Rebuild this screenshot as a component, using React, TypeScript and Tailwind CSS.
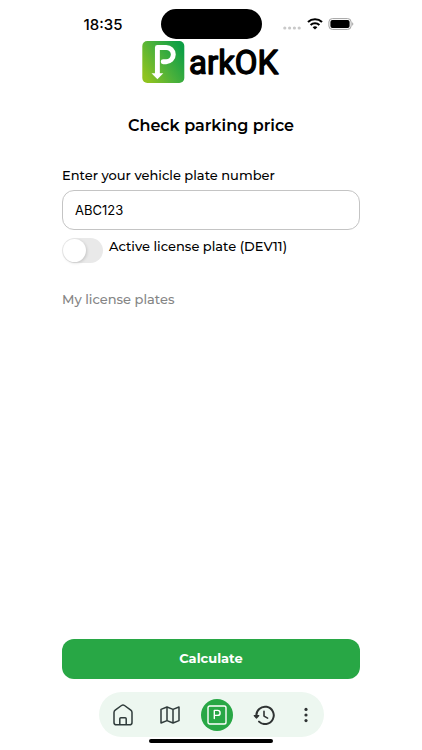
import { useState } from 'react';

function StatusBar() {
  return (
    <div className="grid w-full grid-cols-[1fr_101px_1fr] items-center pt-[9px]">
      <div className="pr-[38px] text-right font-['Inter',sans-serif] text-[15px] font-medium leading-none">
        18:35
      </div>
      <div className="h-[30px] rounded-full bg-black" />
      <div className="flex items-center pl-[21px]">
        <svg width="18" height="4" viewBox="0 0 18 4" fill="#c9c9c9" className="mt-2">
          <circle cx="1.8" cy="2" r="1.6" />
          <circle cx="6.6" cy="2" r="1.6" />
          <circle cx="11.4" cy="2" r="1.6" />
          <circle cx="16.2" cy="2" r="1.6" />
        </svg>
        <svg width="16" height="12" viewBox="0 0 16 12" fill="none" stroke="#000" strokeWidth="2.1" className="ml-[6px]">
          <path d="M1 4.1a10.2 10.2 0 0 1 14 0" />
          <path d="M3.6 7a6.4 6.4 0 0 1 8.8 0" />
          <path d="M8 11.6 5.6 9.3a3.5 3.5 0 0 1 4.8 0Z" fill="#000" stroke="none" />
        </svg>
        <svg width="26" height="12" viewBox="0 0 26 12" className="ml-[5px]">
          <rect x="0.9" y="0.6" width="22.2" height="10.8" rx="3.4" fill="none" stroke="#a3a3a3" />
          <rect x="2.4" y="2.1" width="19.2" height="7.8" rx="2" fill="#000" />
          <path d="M24.2 4.2v3.6c1.5-.6 1.5-3 0-3.6Z" fill="#a3a3a3" />
        </svg>
      </div>
    </div>
  );
}

function Logo() {
  return (
    <svg width="138" height="42" viewBox="0 0 138 42" fill="none" className="mt-[2px]">
      <defs>
        <linearGradient id="logo-bg" x1="2" y1="34" x2="41" y2="10" gradientUnits="userSpaceOnUse">
          <stop offset="0" stopColor="#8fc31f" />
          <stop offset="0.5" stopColor="#4bb13b" />
          <stop offset="1" stopColor="#0f9f45" />
        </linearGradient>
      </defs>
      <rect x="0.3" width="42" height="42" rx="5" fill="url(#logo-bg)" />
      <path d="M15.4 33V6.500h8.800a7.100 7.100 0 0 1 0 14.200h-3" stroke="#fff" strokeWidth="4.900" strokeLinejoin="round" strokeLinecap="round" />
      <path d="M9.500 32.300h11.800l-5.900 6Z" fill="#fff" />
      <text
        x="47"
        y="33"
        fill="#000"
        stroke="#000"
        strokeWidth="1.4"
        strokeLinejoin="round"
        className="font-['Roboto',sans-serif] text-[33px]"
      >
        arkOK
      </text>
    </svg>
  );
}

function HomeIcon() {
  return (
    <svg width="20" height="22" viewBox="0 0 20 22" fill="none" stroke="#2f3b3a" strokeWidth="1.5" strokeLinejoin="round">
      <path d="M1 8.400c0-1 .4-1.700 1.200-2.300l6.300-4.600a2.500 2.500 0 0 1 3 0l6.300 4.600c.8.6 1.200 1.300 1.200 2.300v10a2.400 2.400 0 0 1-2.400 2.400H3.400A2.400 2.400 0 0 1 1 18.400Z" />
      <path d="M6.800 20.800v-6c0-.7.4-1.100 1.100-1.100h4.200c.7 0 1.100.4 1.100 1.100v6" />
    </svg>
  );
}

function MapIcon() {
  return (
    <svg width="20" height="18" viewBox="0 0 20 18" fill="none" stroke="#2f3b3a" strokeWidth="1.5" strokeLinejoin="round">
      <path d="M1 3.400 7 1l6 2.400L19 1v13.600L13 17l-6-2.400L1 17Z" />
      <path d="M7 1v13.600M13 3.400V17" />
    </svg>
  );
}

function ParkingIcon() {
  return (
    <svg width="20" height="20" viewBox="0 0 20 20" fill="none" stroke="#fff" strokeWidth="1.4" strokeLinejoin="round" strokeLinecap="round">
      <rect x="1" y="1" width="18" height="18" rx="1.8" />
      <path d="M7.300 13.600V5.400h3.300a2.500 2.500 0 0 1 0 5H7.300" />
    </svg>
  );
}

function HistoryIcon() {
  return (
    <svg width="22" height="20" viewBox="0 0 22 20" fill="none" stroke="#2f3333" strokeWidth="2" strokeLinecap="round" strokeLinejoin="round">
      <path d="M3.400 11.200A8.700 8.700 0 1 1 6 16.600" />
      <path d="M1.200 10.600h4.600l-2.300 2.500Z" fill="#2f3333" strokeWidth="1.200" />
      <path d="M11 6.300v4.800l3.600 2" strokeWidth="1.600" />
    </svg>
  );
}

function MoreIcon() {
  return (
    <svg width="4" height="16" viewBox="0 0 4 16" fill="#2f3333">
      <circle cx="2" cy="2.400" r="1.600" />
      <circle cx="2" cy="8" r="1.600" />
      <circle cx="2" cy="13.600" r="1.600" />
    </svg>
  );
}

export default function App() {
  const [plate, setPlate] = useState('ABC123');
  const [active, setActive] = useState(false);

  return (
    <div className="flex min-h-screen flex-col items-center bg-white font-['Montserrat','Inter',sans-serif] text-black">
      <StatusBar />
      <Logo />

      <main className="flex w-full flex-1 flex-col px-[62px]">
        <h1 className="mt-[31px] text-center text-[16px] font-semibold leading-6">Check parking price</h1>

        <label htmlFor="plate" className="mt-[27px] text-[13px] font-medium leading-5">
          Enter your vehicle plate number
        </label>
        <input
          id="plate"
          type="text"
          value={plate}
          onChange={(e) => setPlate(e.target.value)}
          className="mt-[5px] h-10 w-full rounded-xl border border-[#c4c4c4] px-3 font-['Inter',sans-serif] text-[13px] outline-none"
        />

        <div className="mt-2 flex h-[26px]">
          <input
            id="active-plate"
            type="checkbox"
            role="switch"
            checked={active}
            onChange={(e) => setActive(e.target.checked)}
            className="flex h-[25px] w-[41px] shrink-0 appearance-none items-center rounded-full bg-[#e9e9e9] px-px before:size-[23px] before:rounded-full before:bg-white before:shadow-[1px_1px_3px_rgba(0,0,0,0.15)] before:content-[''] checked:justify-end checked:bg-[#28a745]"
          />
          <label htmlFor="active-plate" className="ml-[6px] text-[13px] font-medium leading-4">
            Active license plate (DEV11)
          </label>
        </div>

        <h2 className="mt-[25px] text-[13px] font-medium leading-5 text-[#858585]">My license plates</h2>

        <button type="button" className="mt-auto h-10 w-full rounded-xl bg-[#28a745] text-[13px] font-bold text-white">
          Calculate
        </button>
      </main>

      <nav className="mt-[13px] grid h-[45px] grid-cols-[48px_47px_47px_47px_36px] place-items-center rounded-full bg-[#edf7f0]">
        <a href="#home" aria-label="Home"><HomeIcon /></a>
        <a href="#map" aria-label="Map"><MapIcon /></a>
        <a href="#parking" aria-label="Parking" className="flex size-8 items-center justify-center rounded-full bg-[#28a745]">
          <ParkingIcon />
        </a>
        <a href="#history" aria-label="History"><HistoryIcon /></a>
        <a href="#more" aria-label="More"><MoreIcon /></a>
      </nav>
      <div className="mb-[7px] mt-[2px] h-1 w-[124px] rounded-full bg-black" />
    </div>
  );
}
